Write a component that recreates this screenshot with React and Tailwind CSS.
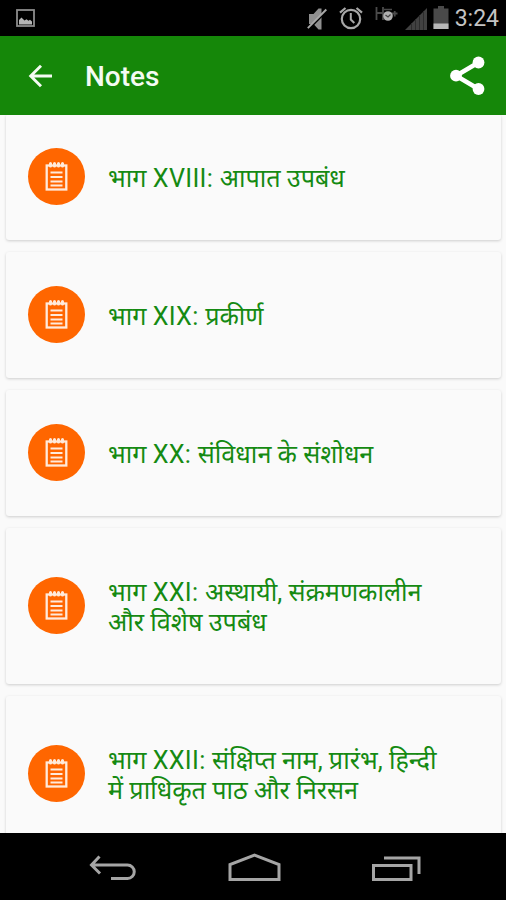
const notes = [
  { part: 'XVIII', lines: ['आपात उपबंध'] },
  { part: 'XIX', lines: ['प्रकीर्ण'] },
  { part: 'XX', lines: ['संविधान के संशोधन'] },
  { part: 'XXI', lines: ['अस्थायी, संक्रमणकालीन', 'और विशेष उपबंध'] },
  { part: 'XXII', lines: ['संक्षिप्त नाम, प्रारंभ, हिन्दी', 'में प्राधिकृत पाठ और निरसन'] },
];

const PictureIcon = () => (
  <svg className="w-[19px] h-[18px]" viewBox="0 0 19 18" fill="none">
    <rect x="1" y="1" width="17" height="16" stroke="#8c8c8c" strokeWidth="1.8" />
    <path d="M3 15.500v-4.500l2.500-2.500 3 3 2-1.200 2 1.400 1.500-1 2 1.800v3z" fill="#b5b5b5" />
  </svg>
);

const MuteIcon = () => (
  <svg className="w-[20px] h-[24px]" viewBox="0 0 20 24" fill="none">
    <path d="M2 7h4.500L11.500 1.500h3v21h-3L6.500 17H2z" fill="#8f8f8f" />
    <path d="M.8 23L19.500 4" stroke="#000" strokeWidth="2" />
    <path d="M.8 21.200L19.300 2.500" stroke="#a8a8a8" strokeWidth="1.900" />
  </svg>
);

const AlarmIcon = () => (
  <svg className="w-[24px] h-[24px]" viewBox="0 0 24 24" fill="none" stroke="#a8a8a8">
    <circle cx="12" cy="13" r="9.200" strokeWidth="2.200" />
    <path d="M11.800 7v6.500l3.500 3.500" strokeWidth="2" />
    <path d="M1 6.700l5.500-4.700M23 6.700l-5.500-4.700" strokeWidth="2.200" />
  </svg>
);

const NetworkIcon = () => (
  <svg className="w-[23px] h-[16px]" viewBox="0 0 23 16" fill="none">
    <path d="M1.500 1v13M8 1v13M1.500 7H8M17 7.500h5.500M19.700 5v5.500" stroke="#4a4a4a" strokeWidth="1.800" />
    <path d="M9 3.500h8" stroke="#4a4a4a" strokeWidth="1.500" />
    <circle cx="13" cy="10" r="4.800" fill="#b0b0b0" />
    <path d="M10.500 9l2.500 2 2.500-2.500" stroke="#444" strokeWidth="1.300" />
  </svg>
);

const SignalIcon = () => (
  <svg className="w-[22px] h-[22px]" viewBox="0 0 22 22">
    <path d="M0 22L22 0v22z" fill="#414141" />
    <path d="M6.500 15v7M10.500 11v11M14.500 7v15M18.500 3v19" stroke="#2c2c2c" strokeWidth="1" />
  </svg>
);

const BatteryIcon = () => (
  <svg className="w-[16px] h-[23px]" viewBox="0 0 16 23">
    <path d="M5 0h6v2.500h4.500V23H.5V2.500H5z" fill="#4a4a4a" />
    <path d="M.5 17.500h15V23H.5z" fill="#b8b8b8" />
  </svg>
);

const StatusBar = () => (
  <div className="h-9 shrink-0 bg-black flex items-start justify-between pl-4 pr-[7px]">
    <div className="pt-[9px]">
      <PictureIcon />
    </div>
    <div className="flex items-start">
      <div className="pt-[7px] mr-[12px]"><MuteIcon /></div>
      <div className="pt-[6px] mr-[12px]"><AlarmIcon /></div>
      <div className="pt-[6px] mr-[7px]"><NetworkIcon /></div>
      <div className="pt-[8px] mr-[6px]"><SignalIcon /></div>
      <div className="pt-[6px] mr-[6px]"><BatteryIcon /></div>
      <span className="pt-[4px] text-[23px] leading-[30px] text-[#c4c4c4] font-[Roboto,sans-serif]">3:24</span>
    </div>
  </div>
);

const AppBar = () => (
  <header className="h-[79px] shrink-0 bg-[#158709] flex items-center pl-7 pr-[20px]">
    <svg className="w-[25px] h-[24px]" viewBox="0 0 25 24" fill="none" stroke="#f4fbf3" strokeWidth="2.900">
      <path d="M2.500 12H24M13 1.700L2.700 12 13 22.300" />
    </svg>
    <h1 className="ml-8 flex-1 pt-0.5 text-[28px] font-medium leading-9 text-[#f4fbf3] font-[Roboto,sans-serif]">Notes</h1>
    <svg className="w-[36px] h-[40px]" viewBox="0 0 36 40" fill="#fff">
      <path d="M28.500 6.500L6 19.700 28.500 33" fill="none" stroke="#fff" strokeWidth="4.500" />
      <circle cx="28.500" cy="6.500" r="5.900" />
      <circle cx="6" cy="19.700" r="5.900" />
      <circle cx="28.500" cy="33" r="5.900" />
    </svg>
  </header>
);

const NoteIcon = () => (
  <div className="-my-4 w-[57px] h-[57px] rounded-full bg-[#ff6600] flex items-center justify-center shrink-0">
    <svg className="w-[23px] h-[30px]" viewBox="0 0 23 30" fill="none" stroke="#ffeadb">
      <rect x="1.700" y="4.500" width="19.600" height="24" strokeWidth="2.300" />
      <path d="M5.500 11.500h12M5.500 16h12M5.500 20.500h12M5.500 24.500h12" strokeWidth="1.800" />
      <path d="M5.500 2.500v2.500M9.500 2.500v2.500M13.500 2.500v2.500M17.500 2.500v2.500" strokeWidth="3" strokeLinecap="round" />
    </svg>
  </div>
);

const NoteCard = ({ part, lines }) => (
  <li className="shrink-0 pt-[47px] pb-[49px] pl-[22px] flex items-center gap-[23px] rounded-[3px] bg-[#fafafa] shadow-[0_1px_3px_rgba(0,0,0,0.18)]">
    <NoteIcon />
    <p className="pt-[3px] -mb-[3px] text-[25.2px] leading-[30px] text-[#158a12] whitespace-nowrap font-[Roboto,'Noto_Sans',sans-serif]">
      {lines.map((line, i) => (
        <span key={line} className="block">
          {i === 0 && <>भाग <span className="tracking-[0.3px]">{part}: </span></>}
          {line}
        </span>
      ))}
    </p>
  </li>
);

const NavBar = () => (
  <nav className="h-[67px] shrink-0 bg-black flex items-start justify-between pl-[89px] pr-[85px] pt-[20px]">
    <svg className="w-[48px] h-[28px]" viewBox="0 0 48 28" fill="none" stroke="#a5a5a5" strokeWidth="3">
      <path d="M2 12h36.500a6.700 6.700 0 0 1 0 13.500H22M10.500 3.500L2.500 12l8.500 8.500" />
    </svg>
    <svg className="w-[54px] h-[30px]" viewBox="0 0 54 30" fill="none" stroke="#a5a5a5" strokeWidth="3">
      <path d="M2 26.500V11.500L26.500 2l24.500 9.500v15z" />
    </svg>
    <svg className="w-[49px] h-[29px]" viewBox="0 0 49 29" fill="none" stroke="#a5a5a5" strokeWidth="3">
      <path d="M1.500 12.500h37.500v14h-37.500zM12 5h35v16" />
    </svg>
  </nav>
);

export default function App() {
  return (
    <div className="w-full h-[900px] flex flex-col overflow-hidden bg-[#fafafa]">
      <StatusBar />
      <AppBar />
      <main className="flex-1 min-h-0 overflow-hidden">
        <ul className="-mt-px pl-[6px] pr-[5px] flex flex-col gap-3">
          {notes.map((note) => (
            <NoteCard key={note.part} part={note.part} lines={note.lines} />
          ))}
        </ul>
      </main>
      <NavBar />
    </div>
  );
}
